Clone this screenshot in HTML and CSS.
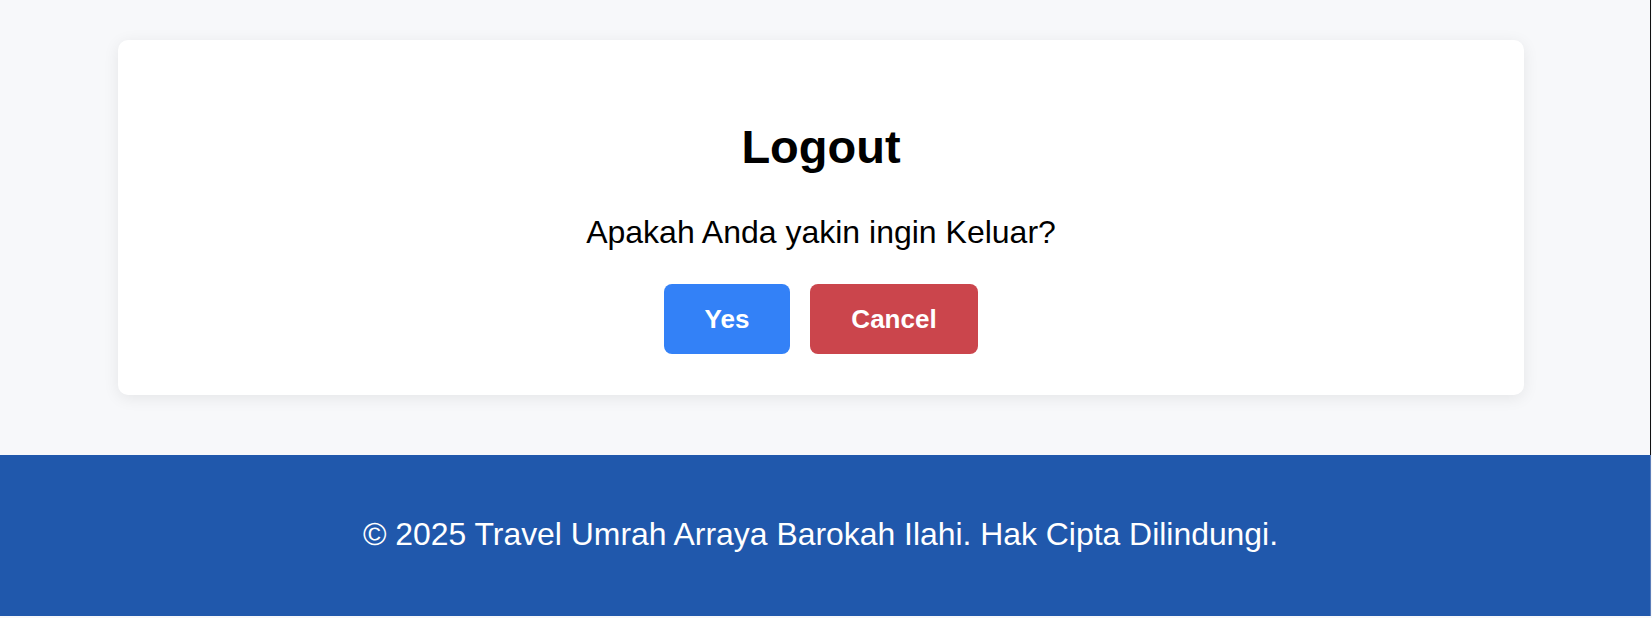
FILE: index.html
```html
<!DOCTYPE html>
<html lang="id">
<head>
<meta charset="utf-8">
<title>Logout</title>
<link rel="stylesheet" href="styles.css">
</head>
<body>
<div class="page">
  <main class="main">
    <section class="card">
      <h1 class="title">Logout</h1>
      <p class="message">Apakah Anda yakin ingin Keluar?</p>
      <div class="actions">
        <button class="btn btn-yes" type="button">Yes</button>
        <button class="btn btn-cancel" type="button">Cancel</button>
      </div>
    </section>
  </main>
  <footer class="footer">
    <p class="footer-text">© 2025 Travel Umrah Arraya Barokah Ilahi. Hak Cipta Dilindungi.</p>
  </footer>
</div>
</body>
</html>
```

FILE: styles.css
```css
html, body {
  margin: 0;
  padding: 0;
}

body {
  background: #f7f8fa;
  font-family: "Liberation Sans", Arial, Helvetica, sans-serif;
  color: #000;
}

.page {
  display: flex;
  flex-direction: column;
  width: 1651px;
}

.main {
  padding: 40px 126px 60px 118px;
  border-right: 1px solid #111;
  width: 1406px;
}

.card {
  background: #fff;
  border-radius: 10px;
  box-shadow: 0 3px 16px rgba(0, 0, 0, 0.08);
  padding: 40px 40px 41px;
  display: flex;
  flex-direction: column;
  align-items: center;
  text-align: center;
}

.title {
  margin: 39px 0 0;
  font-size: 47px;
  line-height: 56px;
  font-weight: 700;
}

.message {
  margin: 39px 0 0;
  font-size: 32px;
  line-height: 36px;
}

.actions {
  margin-top: 34px;
  display: flex;
  gap: 20px;
}

.btn {
  height: 70px;
  padding: 0 40px;
  border: none;
  border-radius: 8px;
  color: #fff;
  font-family: "Liberation Sans", Arial, Helvetica, sans-serif;
  font-weight: 700;
  font-size: 26px;
  display: flex;
  align-items: center;
  justify-content: center;
}

.btn-yes {
  background: #3381f7;
  width: 126px;
}

.btn-cancel {
  background: #cb454c;
  width: 168px;
}

.footer {
  background: #2058ac;
  border-right: 1px solid #5b7db9;
  padding: 61px 9px 64px 0;
  color: #fff;
  text-align: center;
}

.footer-text {
  margin: 0;
  font-size: 31.9px;
  line-height: 36px;
}
```
